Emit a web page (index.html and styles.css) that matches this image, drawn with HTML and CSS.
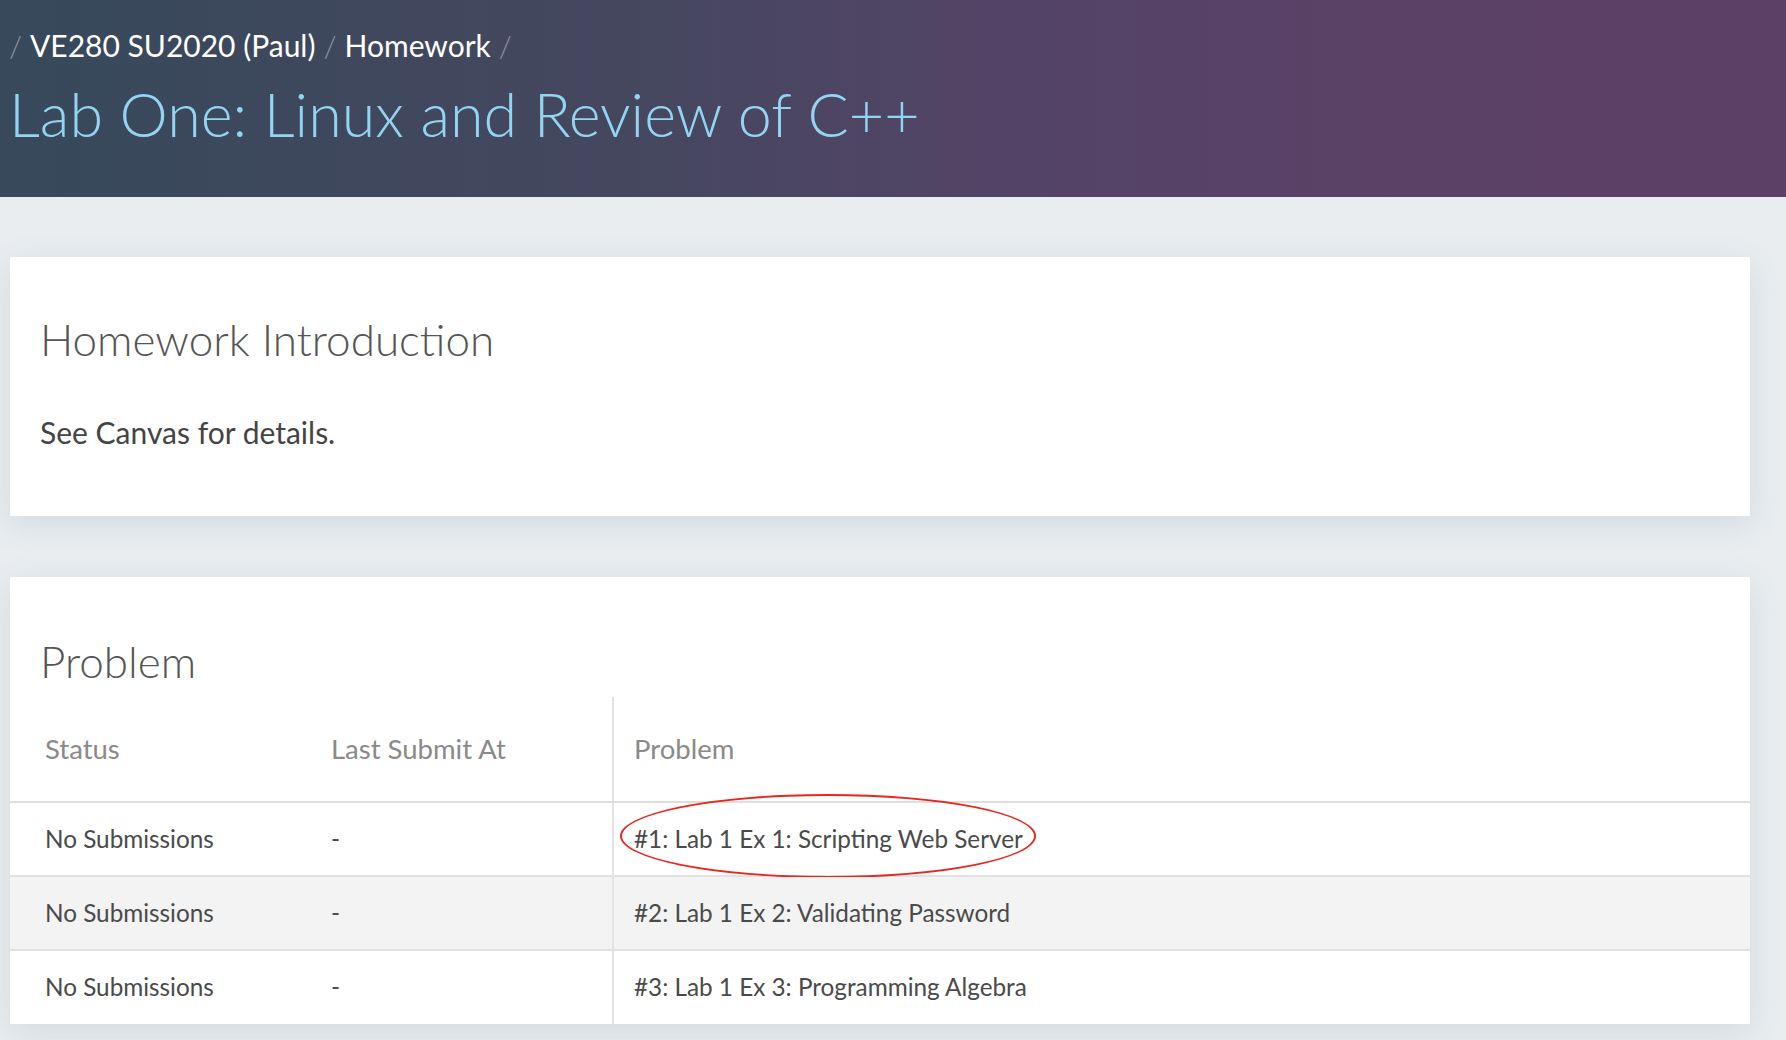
FILE: index.html
```html
<!DOCTYPE html>
<html>
<head>
<meta charset="utf-8">
<link rel="stylesheet" href="styles.css">
</head>
<body>
<header class="hero">
  <nav class="crumbs">
    <span class="sep">/</span>
    <a class="crumb" href="#">VE280 SU2020 (Paul)</a>
    <span class="sep">/</span>
    <a class="crumb" href="#">Homework</a>
    <span class="sep">/</span>
  </nav>
  <h1 class="title">Lab One: Linux and Review of C++</h1>
</header>
<main class="main">
  <section class="card intro">
    <h2 class="card-title">Homework Introduction</h2>
    <p class="intro-text">See Canvas for details.</p>
  </section>
  <section class="card problems">
    <h2 class="card-title">Problem</h2>
    <table class="ptable">
      <thead>
        <tr>
          <th class="c-status">Status</th>
          <th class="c-time">Last Submit At</th>
          <th class="c-prob">Problem</th>
        </tr>
      </thead>
      <tbody>
        <tr>
          <td class="c-status">No Submissions</td>
          <td class="c-time">-</td>
          <td class="c-prob"><span class="mark"></span>#1: Lab 1 Ex 1: Scripting Web Server</td>
        </tr>
        <tr class="alt">
          <td class="c-status">No Submissions</td>
          <td class="c-time">-</td>
          <td class="c-prob">#2: Lab 1 Ex 2: Validating Password</td>
        </tr>
        <tr>
          <td class="c-status">No Submissions</td>
          <td class="c-time">-</td>
          <td class="c-prob">#3: Lab 1 Ex 3: Programming Algebra</td>
        </tr>
      </tbody>
    </table>
  </section>
</main>
</body>
</html>
```
FILE: styles.css
```css
* { box-sizing: border-box; }
html, body { margin: 0; padding: 0; }
body {
  background: #e9edf0;
  font-family: "Lato", "Open Sans", sans-serif;
  color: #444;
  height: 1040px;
  overflow: hidden;
}
.hero {
  height: 197px;
  background: linear-gradient(to right, #37495b 0%, #45475f 35%, #564368 62%, #5c4166 80%, #5c4065 100%);
  padding: 26px 0 0 9px;
}
.crumbs {
  font-size: 30px;
  line-height: 38px;
  height: 38px;
  display: flex;
  gap: 8px;
  align-items: baseline;
}
.sep { color: #8b93a3; font-weight: 300; }
.crumb { color: #fff; text-decoration: none; font-weight: 400; }
.title {
  margin: 10px 0 0 0;
  font-size: 61px;
  line-height: 80px;
  font-weight: 300;
  color: #93d4f0;
  letter-spacing: 0;
}
.main {
  padding: 60px 36px 0 10px;
  display: flex;
  flex-direction: column;
  gap: 61px;
}
.card {
  background: #fff;
  box-shadow: 0 8px 30px rgba(70, 95, 115, 0.13);
}
.intro {
  height: 259px;
  padding: 54px 30px 0 30px;
}
.card-title {
  margin: 0;
  font-size: 44px;
  line-height: 56px;
  font-weight: 300;
  color: #555;
}
.intro-text {
  margin: 47px 0 0 0;
  font-size: 30px;
  line-height: 36px;
  color: #444;
}
.problems {
  padding-top: 56px;
}
.problems .card-title { padding-left: 30px; }
.ptable {
  margin-top: 8px;
  width: 100%;
  border-collapse: collapse;
  font-size: 24.3px;
}
.ptable th {
  text-align: left;
  font-weight: 400;
  font-size: 27.5px;
  color: #8a8a8a;
  height: 105px;
  padding: 0 20px 2px 20px;
  border-bottom: 2px solid #dedede;
}
.ptable td {
  height: 74px;
  padding: 0 20px 2px 20px;
  color: #4a4a4a;
  border-bottom: 2px solid #e2e2e2;
}
.ptable tbody tr:last-child td { border-bottom: none; }
.ptable tr.alt td { background: #f3f3f3; }
.ptable .c-status { width: 301px; padding-left: 35px; }
.ptable .c-time { width: 302px; }
.ptable .c-prob {
  border-left: 2px solid #e3e3e3;
  position: relative;
}
.mark {
  position: absolute;
  left: 6px;
  top: -9px;
  width: 416px;
  height: 84px;
  border: 2px solid #e8271f;
  border-radius: 50%;
  pointer-events: none;
}
```
